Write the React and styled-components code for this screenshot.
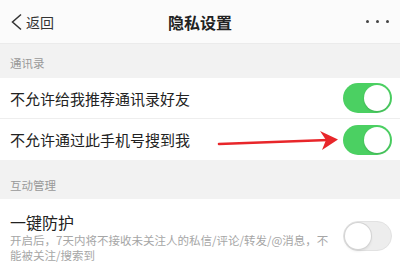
import React from 'react';
import styled, { createGlobalStyle } from 'styled-components';

const GlobalStyle = createGlobalStyle`
  body {
    margin: 0;
    background: #f2f2f2;
    font-family: "Noto Sans CJK SC", "Noto Sans", sans-serif;
    color: #222;
  }
`;

const Page = styled.div`
  width: 400px;
  height: 263px;
  overflow: hidden;
  background: #f2f2f2;
`;

const NavBar = styled.div`
  display: grid;
  grid-template-columns: 1fr auto 1fr;
  align-items: center;
  height: 43px;
  padding: 0 10px;
  background: #fbfbfb;
  border-bottom: 1px solid #ebebeb;
`;

const Back = styled.div`
  display: flex;
  align-items: center;
  gap: 2px;
  font-size: 14px;
  color: #333;
`;

const Title = styled.div`
  font-size: 16px;
  font-weight: 700;
  color: #222;
`;

const More = styled.div`
  display: flex;
  justify-content: flex-end;
  gap: 7px;
  padding-right: 1px;

  span {
    width: 3px;
    height: 3px;
    border-radius: 50%;
    background: #444;
  }
`;

const SectionTitle = styled.div`
  display: flex;
  align-items: flex-end;
  height: ${(p) => p.$height}px;
  box-sizing: border-box;
  padding: 0 10px ${(p) => p.$bottom}px;
  font-size: 11.5px;
  line-height: 16px;
  color: #999;
`;

const Row = styled.div`
  position: relative;
  display: flex;
  align-items: center;
  justify-content: space-between;
  height: ${(p) => p.$height}px;
  padding: 0 8px 0 10px;
  background: #fff;
  border-bottom: ${(p) => (p.$line ? '1px solid #eeeeee' : 'none')};
`;

const Label = styled.div`
  font-size: 15px;
  color: #222;
`;

const Toggle = styled.div`
  position: relative;
  flex: none;
  width: 49px;
  height: 30px;
  box-sizing: border-box;
  border-radius: 15px;
  background: ${(p) => (p.$on ? '#4bd062' : '#ededed')};
  border: ${(p) => (p.$on ? 'none' : '1px solid #e2e2e2')};

  &::after {
    content: '';
    position: absolute;
    top: ${(p) => (p.$on ? 2 : 1)}px;
    left: ${(p) => (p.$on ? 21 : 1)}px;
    width: 26px;
    height: 26px;
    border-radius: 50%;
    background: #fff;
    box-shadow: ${(p) =>
      p.$on ? '0 1px 2px rgba(0,0,0,0.15)' : '0 0 0 1px #d4d4d4, 0 2px 3px rgba(0,0,0,0.1)'};
  }
`;

const Arrow = styled.svg`
  position: absolute;
  left: 216px;
  top: 8px;
`;

const GuardRow = styled.div`
  display: flex;
  justify-content: space-between;
  align-items: flex-start;
  padding: 13px 8px 0 10px;
  background: #fff;
  height: 51px;
`;

const GuardText = styled.div`
  width: 320px;
`;

const GuardTitle = styled.div`
  font-size: 16px;
  line-height: 20px;
  color: #222;
`;

const GuardDesc = styled.div`
  margin-top: 1px;
  font-size: 11.5px;
  line-height: 15px;
  color: #a6a6a6;
`;

const GuardToggle = styled(Toggle)`
  margin-top: 9px;
`;

export default function App() {
  return (
    <Page>
      <GlobalStyle />
      <NavBar>
        <Back>
          <svg width="14" height="18" viewBox="0 0 14 18">
            <polyline points="11,1.5 2.5,9 11,16.5" fill="none" stroke="#333" strokeWidth="1.5" />
          </svg>
          返回
        </Back>
        <Title>隐私设置</Title>
        <More>
          <span />
          <span />
          <span />
        </More>
      </NavBar>

      <SectionTitle $height={34} $bottom={7}>通讯录</SectionTitle>
      <Row $height={40} $line>
        <Label>不允许给我推荐通讯录好友</Label>
        <Toggle $on />
      </Row>
      <Row $height={41}>
        <Label>不允许通过此手机号搜到我</Label>
        <Arrow width="124" height="24" viewBox="0 0 124 24">
          <path d="M3 17 L112 13" stroke="#e8262a" strokeWidth="2.6" strokeLinecap="round" />
          <path d="M104 4 L122 12.5 L106 23 L110 13 Z" fill="#e8262a" />
        </Arrow>
        <Toggle $on />
      </Row>

      <SectionTitle $height={39} $bottom={6}>互动管理</SectionTitle>
      <GuardRow>
        <GuardText>
          <GuardTitle>一键防护</GuardTitle>
          <GuardDesc>开启后，7天内将不接收未关注人的私信/评论/转发/@消息，不能被关注/搜索到</GuardDesc>
        </GuardText>
        <GuardToggle />
      </GuardRow>
    </Page>
  );
}
